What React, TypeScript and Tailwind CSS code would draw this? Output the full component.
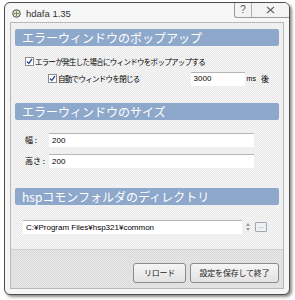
import React from 'react'

const jp = "font-['MS_UI_Gothic','Noto_Sans_CJK_JP',sans-serif]"
const latin = "font-['Liberation_Sans','Noto_Sans_CJK_JP',sans-serif]"

function SectionBar({ title }: { title: string }) {
  return (
    <div className={`mx-[4px] h-[17px] rounded-[2px] bg-[#8ea8cb] pl-[7px] flex items-center text-white text-[12px] leading-none ${jp}`}>
      {title}
    </div>
  )
}

function Check({ checked = true }: { checked?: boolean }) {
  return (
    <span className="w-[9px] h-[9px] border border-[#8c8c8c] bg-white flex items-center justify-center shrink-0">
      {checked && (
        <svg width="7" height="7" viewBox="0 0 7 7">
          <path d="M1 3.5 L2.8 5.5 L6 1" fill="none" stroke="#2c4f9e" strokeWidth="1.3" />
        </svg>
      )}
    </span>
  )
}

function TextBox({ value, className }: { value: string; className: string }) {
  return (
    <div className={`h-[14px] bg-white border-t border-[#b5b5b5] pl-[3px] flex items-center text-[8px] text-black leading-none ${latin} ${className}`}>
      {value}
    </div>
  )
}

export default function App() {
  return (
    <div className="w-[295px] h-[300px] bg-white pt-[2px] pl-[4px]">
      {/* Window frame */}
      <div className="w-[286px] h-[293px] border border-[#4d4d4d] rounded-[6px] bg-[#f6f6f6] shadow-[2px_2px_3px_rgba(0,0,0,0.45)] flex flex-col">
        {/* Title bar */}
        <div className="h-[19px] flex items-start shrink-0">
          <div className="flex items-center pl-[7px] pt-[6px] gap-[5px]">
            <svg width="9" height="9" viewBox="0 0 9 9">
              <circle cx="4.5" cy="4.5" r="3.8" fill="#dfe6d0" stroke="#4e5a3c" strokeWidth="1" />
              <path d="M1.5 4.5 H7.5 M4.5 1.5 V7.5" stroke="#6b7b50" strokeWidth="0.8" />
            </svg>
            <span className={`text-[9.5px] text-[#333] leading-none ${latin}`}>hdafa 1.35</span>
          </div>
          <div className="ml-auto flex h-[15px] border-l border-b border-[#9a9a9a] rounded-bl-[3px] rounded-tr-[5px] bg-[#f3f3f3] text-[#555] text-[10px] leading-none">
            <div className={`w-[17px] flex items-center justify-center border-r border-[#b0b0b0] ${latin}`}>?</div>
            <div className="w-[37px] flex items-center justify-center">
              <svg width="9" height="8" viewBox="0 0 9 8">
                <path d="M1 1 L8 7 M8 1 L1 7" stroke="#666" strokeWidth="1.2" />
              </svg>
            </div>
          </div>
        </div>

        {/* Client area */}
        <div className="mx-[5px] mb-[5px] flex-1 border border-[#b8b8b8] bg-[repeating-conic-gradient(#e9e9e9_0%_25%,#f6f6f6_0%_50%)] bg-size-[2px_2px] flex flex-col">
          <div className="mt-[6px]">
            <SectionBar title="エラーウィンドウのポップアップ" />
          </div>

          <div className={`mt-[10px] pl-[14px] flex items-center gap-[1px] h-[11px] text-[7.5px] tracking-[-0.7px] text-black leading-none ${jp}`}>
            <Check />
            <span>エラーが発生した場合にウィンドウをポップアップする</span>
          </div>

          <div className={`mt-[5px] pl-[37px] flex items-center h-[13px] text-[7.5px] tracking-[-0.7px] text-black leading-none ${jp}`}>
            <Check />
            <span className="ml-[1px]">自動でウィンドウを閉じる</span>
            <TextBox value="3000" className="ml-[51px] w-[54px] h-[13px] tracking-normal" />
            <span className={`ml-[2px] text-[7px] tracking-normal ${latin}`}>ms</span>
            <span className="ml-[5px] text-[8px] tracking-normal">後</span>
          </div>

          <div className="mt-[18px]">
            <SectionBar title="エラーウィンドウのサイズ" />
          </div>

          <div className={`mt-[13px] pl-[14px] flex items-center text-[8px] text-black leading-none ${jp}`}>
            <span className="w-[24px]">幅 :</span>
            <TextBox value="200" className="w-[205px]" />
          </div>
          <div className={`mt-[7px] pl-[14px] flex items-center text-[8px] text-black leading-none ${jp}`}>
            <span className="w-[24px]">高さ :</span>
            <TextBox value="200" className="w-[205px]" />
          </div>

          <div className="mt-[20px]">
            <SectionBar title="hspコモンフォルダのディレクトリ" />
          </div>

          <div className="mt-[15px] pl-[12px] flex items-center">
            <TextBox value="C:¥Program Files¥hsp321¥common" className="w-[219px]" />
            <div className="ml-[3px] w-[6px] h-[10px] flex flex-col items-center justify-center gap-[2px]">
              <span className="w-0 h-0 border-x-[2px] border-x-transparent border-b-[3px] border-b-[#9a9a9a]" />
              <span className="w-0 h-0 border-x-[2px] border-x-transparent border-t-[3px] border-t-[#9a9a9a]" />
            </div>
            <div className={`ml-[4px] w-[12px] h-[10px] border border-[#9fa8b3] rounded-[1px] bg-[#eef1f4] flex items-end justify-center text-[6px] text-[#444] leading-none pb-[2px] ${latin}`}>
              ...
            </div>
          </div>

          {/* Bottom button strip */}
          <div className="mt-auto h-[39px] bg-[repeating-conic-gradient(#dadada_0%_25%,#e8e8e8_0%_50%)] bg-size-[2px_2px] border-t border-[#d0d0d0] flex items-start justify-end pt-[13px] pr-[4px] gap-[4px]">
            <button className={`w-[53px] h-[20px] border border-[#8a8a8a] rounded-[3px] bg-[linear-gradient(#f6f6f6,#e2e2e2)] text-[8px] tracking-[-0.2px] text-[#222] leading-none ${jp}`}>
              リロード
            </button>
            <button className={`w-[89px] h-[20px] border border-[#8a8a8a] rounded-[3px] bg-[linear-gradient(#f6f6f6,#e2e2e2)] text-[8px] tracking-[-0.2px] text-[#222] leading-none ${jp}`}>
              設定を保存して終了
            </button>
          </div>
        </div>
      </div>
    </div>
  )
}
